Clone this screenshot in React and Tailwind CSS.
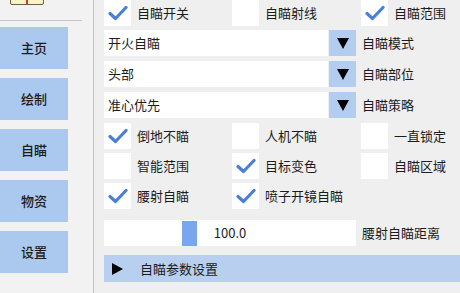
const font = { fontFamily: '"Noto Sans CJK SC", "Noto Sans", sans-serif' };

function Check({ checked }) {
  return (
    <div className="w-[27px] h-[26px] bg-white flex items-center justify-center shrink-0">
      {checked && (
        <svg width="20" height="16" viewBox="0 0 20 16">
          <path d="M2 8.5 L7.5 13.5 L18 2.5" fill="none" stroke="#4a7fd4" strokeWidth="3.2" strokeLinecap="round" strokeLinejoin="round" />
        </svg>
      )}
    </div>
  );
}

function CheckItem({ checked, label }) {
  return (
    <div className="flex items-center h-[26px]">
      <Check checked={checked} />
      <span className="ml-[6px] text-[13px] text-[#1c1c1c] whitespace-nowrap">{label}</span>
    </div>
  );
}

function Combo({ value, label }) {
  return (
    <div className="flex items-center h-[26px]">
      <div className="w-[224px] h-full bg-white flex items-center pl-[4px] text-[13px] text-[#1c1c1c]">{value}</div>
      <div className="w-[27px] h-full ml-px bg-[#b3cdf0] flex items-center justify-center">
        <svg width="12" height="11" viewBox="0 0 12 11">
          <polygon points="0,0 12,0 6,11" fill="#000" />
        </svg>
      </div>
      <span className="ml-[6px] text-[13px] text-[#1c1c1c]">{label}</span>
    </div>
  );
}

const navItems = ['主页', '绘制', '自瞄', '物资', '设置'];

export default function App() {
  return (
    <div className="w-[460px] h-[293px] flex overflow-hidden bg-[#efefef]" style={font}>
      {/* sidebar */}
      <div className="w-[94px] h-full bg-[#f2f2f2] border-r border-[#c4c4c4] shrink-0">
        <div className="h-[20px] relative">
          <div className="absolute left-[10px] top-[-6px] w-[34px] h-[11px] bg-[#fbf3c8] border border-[#6b6040] rounded-[2px] flex justify-center">
            <div className="w-[2px] h-full bg-[#d23a2a]" />
          </div>
        </div>
        <div className="w-[82px] h-px bg-[#c6c6c6]" />
        <div className="flex flex-col gap-[9px] mt-[6px]">
          {navItems.map((t) => (
            <div key={t} className="w-[68px] h-[42px] bg-[#abc8ef] flex items-center justify-center text-[13px] text-[#1c1c1c] font-medium">
              {t}
            </div>
          ))}
        </div>
      </div>

      {/* main */}
      <div className="flex-1 pl-[10px]">
        <div className="grid grid-cols-[128px_129px_1fr] h-[26px]">
          <CheckItem checked label="自瞄开关" />
          <CheckItem label="自瞄射线" />
          <CheckItem checked label="自瞄范围" />
        </div>

        <div className="flex flex-col gap-[5px] mt-[4px]">
          <Combo value="开火自瞄" label="自瞄模式" />
          <Combo value="头部" label="自瞄部位" />
          <Combo value="准心优先" label="自瞄策略" />
        </div>

        <div className="flex flex-col gap-[4px] mt-[5px]">
          <div className="grid grid-cols-[128px_129px_1fr]">
            <CheckItem checked label="倒地不瞄" />
            <CheckItem label="人机不瞄" />
            <CheckItem label="一直锁定" />
          </div>
          <div className="grid grid-cols-[128px_129px_1fr]">
            <CheckItem label="智能范围" />
            <CheckItem checked label="目标变色" />
            <CheckItem label="自瞄区域" />
          </div>
          <div className="grid grid-cols-[128px_129px_1fr]">
            <CheckItem checked label="腰射自瞄" />
            <CheckItem checked label="喷子开镜自瞄" />
          </div>
        </div>

        <div className="flex items-center h-[26px] mt-[11px]">
          <div className="w-[252px] h-full bg-white relative flex items-center justify-center text-[13px] text-[#1c1c1c]">
            <div className="absolute left-[78px] top-[1px] w-[15px] h-[25px] bg-[#78a7ee]" />
            <span>100.0</span>
          </div>
          <span className="ml-[6px] text-[13px] text-[#1c1c1c]">腰射自瞄距离</span>
        </div>

        <div className="flex items-center h-[27px] mt-[9px] bg-[#b8cff0]">
          <svg width="12" height="12" viewBox="0 0 12 12" className="ml-[8px]">
            <polygon points="0,0 11,6 0,12" fill="#000" />
          </svg>
          <span className="ml-[16px] text-[13px] text-[#1c1c1c]">自瞄参数设置</span>
        </div>
      </div>
    </div>
  );
}
